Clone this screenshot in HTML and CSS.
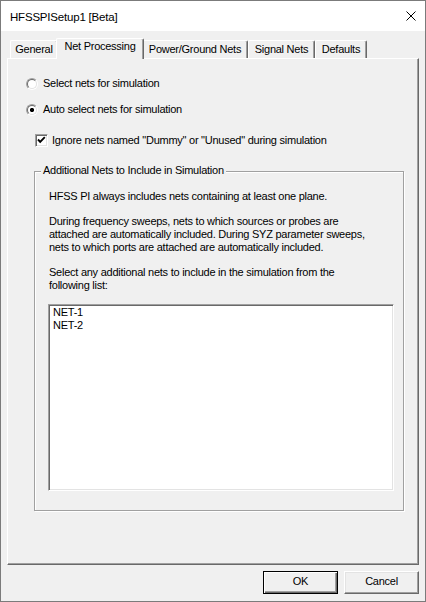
FILE: index.html
```html
<!DOCTYPE html>
<html>
<head>
<meta charset="utf-8">
<link rel="stylesheet" href="styles.css">
</head>
<body>
<div class="window">
  <div class="titlebar">
    <span class="title">HFSSPISetup1 [Beta]</span>
    <svg class="close" width="10" height="10" viewBox="0 0 10 10"><path d="M0.5 0.5 L9.5 9.5 M9.5 0.5 L0.5 9.5" stroke="#000" stroke-width="1" fill="none"/></svg>
  </div>
  <div class="body">
    <div class="tabs">
      <div class="tab t-general">General</div>
      <div class="tab active t-net">Net Processing</div>
      <div class="tab t-power">Power/Ground Nets</div>
      <div class="tab t-signal">Signal Nets</div>
      <div class="tab t-defaults">Defaults</div>
    </div>
    <div class="panel">
      <div class="row radio-row r1"><span class="radio"></span><span>Select nets for simulation</span></div>
      <div class="row radio-row r2"><span class="radio on"></span><span>Auto select nets for simulation</span></div>
      <div class="row chk-row"><span class="checkbox"><svg width="11" height="11" viewBox="0 0 11 11"><path d="M2 4.5 L4.2 6.8 L8.8 2.2" stroke="#000" stroke-width="1.9" fill="none"/></svg></span><span>Ignore nets named "Dummy" or "Unused" during simulation</span></div>
      <div class="group">
        <span class="legend">Additional Nets to Include in Simulation</span>
        <p>HFSS PI always includes nets containing at least one plane.</p>
        <p>During frequency sweeps, nets to which sources or probes are<br>attached are automatically included. During SYZ parameter sweeps,<br>nets to which ports are attached are automatically included.</p>
        <p>Select any additional nets to include in the simulation from the<br>following list:</p>
        <div class="listbox">
          <div class="item">NET-1</div>
          <div class="item">NET-2</div>
        </div>
      </div>
    </div>
    <div class="buttons">
      <button class="btn default">OK</button>
      <button class="btn">Cancel</button>
    </div>
  </div>
</div>
</body>
</html>
```
FILE: styles.css
```css
html, body {
  margin: 0;
  padding: 0;
}
body {
  font-family: "Liberation Sans", Arial, sans-serif;
  font-size: 11px;
  letter-spacing: -0.25px;
  color: #000;
}
.window {
  width: 426px;
  height: 602px;
  box-sizing: border-box;
  border: 1px solid #7b7b7b;
  background: #f0f0f0;
  display: flex;
  flex-direction: column;
}
.titlebar {
  height: 30px;
  flex: none;
  background: #fff;
  display: flex;
  align-items: center;
  padding: 0 9px 0 9px;
}
.title {
  font-size: 11.5px;
  letter-spacing: -0.2px;
  line-height: 14px;
  padding-top: 1px;
}
.close {
  margin-left: auto;
  display: block;
}
.body {
  padding: 0 6px;
  display: flex;
  flex-direction: column;
}
.tabs {
  margin-top: 7px;
  height: 20px;
  display: flex;
  align-items: flex-end;
  padding-left: 3px;
}
.tab {
  box-sizing: border-box;
  height: 18px;
  line-height: 13px;
  padding-top: 2px;
  text-align: center;
  white-space: nowrap;
  background: #f0f0f0;
  border-top: 1px solid #fff;
  border-left: 1px solid #fff;
  border-right: 1px solid #696969;
  box-shadow: inset -1px 0 0 #a0a0a0;
  border-radius: 2px 2px 0 0;
}
.tab.active {
  height: 21px;
  margin: 0 -2px -1px -2px;
  padding-top: 1px;
  position: relative;
  z-index: 1;
}
.t-general { width: 48px; }
.t-net { width: 88px; }
.t-power { width: 106px; }
.t-signal { width: 67px; }
.t-defaults { width: 52px; }
.panel {
  box-sizing: border-box;
  height: 507px;
  border: 1px solid;
  border-color: #fff #696969 #696969 #fff;
  box-shadow: inset -1px -1px 0 #a0a0a0;
  display: flex;
  flex-direction: column;
  align-items: flex-start;
}
.row {
  display: flex;
  align-items: center;
  height: 13px;
  line-height: 13px;
  white-space: nowrap;
}
.radio-row {
  padding-left: 18px;
}
.r1 { margin-top: 18px; }
.r2 { margin-top: 13px; }
.radio {
  box-sizing: border-box;
  width: 12px;
  height: 12px;
  border-radius: 50%;
  border: 1px solid;
  border-color: #a0a0a0 #fff #fff #a0a0a0;
  margin-right: 5px;
  flex: none;
}
.radio::before {
  content: "";
  display: block;
  box-sizing: border-box;
  width: 10px;
  height: 10px;
  border-radius: 50%;
  border: 1px solid;
  border-color: #696969 #e3e3e3 #e3e3e3 #696969;
  background: #fff;
}
.radio.on::before {
  background: radial-gradient(circle at 50% 50%, #000 0, #000 1.8px, #fff 2.4px);
}
.chk-row {
  margin-top: 18px;
  padding-left: 27px;
}
.checkbox {
  box-sizing: border-box;
  width: 13px;
  height: 13px;
  border: 1px solid;
  border-color: #a0a0a0 #fff #fff #a0a0a0;
  box-shadow: inset 1px 1px 0 #696969, inset -1px -1px 0 #e3e3e3;
  background: #fff;
  margin-right: 4px;
  flex: none;
  display: flex;
  align-items: center;
  justify-content: center;
}
.checkbox svg {
  display: block;
}
.group {
  position: relative;
  box-sizing: border-box;
  margin-top: 24px;
  margin-left: 26px;
  width: 370px;
  height: 340px;
  border: 1px solid #a0a0a0;
  box-shadow: inset 1px 1px 0 #fff, 1px 1px 0 #fff;
  padding: 18px 0 0 14px;
}
.legend {
  position: absolute;
  left: 6px;
  top: -8px;
  line-height: 13px;
  padding: 0 2px;
  background: #f0f0f0;
  white-space: nowrap;
}
.group p {
  margin: 0 0 12px 0;
  line-height: 13px;
  white-space: nowrap;
}
.listbox {
  box-sizing: border-box;
  margin-top: 2px;
  margin-left: -1px;
  width: 346px;
  height: 187px;
  background: #fff;
  border: 1px solid;
  border-color: #a0a0a0 #fff #fff #a0a0a0;
  box-shadow: inset 1px 1px 0 #696969, inset -1px -1px 0 #e3e3e3;
  padding: 1px 0 0 4px;
}
.item {
  line-height: 13px;
}
.buttons {
  margin-top: 6px;
  display: flex;
  justify-content: flex-end;
  gap: 6px;
}
.btn {
  box-sizing: border-box;
  width: 75px;
  height: 23px;
  margin: 0;
  padding: 0 0 2px 0;
  font-family: "Liberation Sans", Arial, sans-serif;
  font-size: 11px;
  letter-spacing: -0.25px;
  line-height: 13px;
  color: #000;
  background: #f0f0f0;
  border: 1px solid;
  border-color: #fff #696969 #696969 #fff;
  box-shadow: inset -1px -1px 0 #a0a0a0, inset 1px 1px 0 #e3e3e3;
}
.btn.default {
  border: 1px solid #000;
  box-shadow: inset 1px 1px 0 #fff, inset -1px -1px 0 #696969, inset -2px -2px 0 #a0a0a0;
}
```
